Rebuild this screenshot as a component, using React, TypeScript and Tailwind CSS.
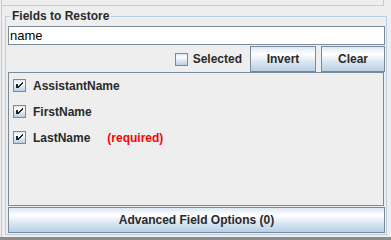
import React from "react";

const oceanGradient =
    "bg-[linear-gradient(to_bottom,#dde8f3_0%,#ffffff_30%,#dde8f3_60%,#b8cfe5_100%)]";

// Metal-style check mark, drawn pixel by pixel
const CheckMark = () => (
    <svg width="11" height="11" viewBox="0 0 11 11" shapeRendering="crispEdges">
        <rect x="2" y="4" width="2" height="4" fill="#222222" />
        {[
            [8, 2],
            [7, 3],
            [6, 4],
            [5, 5],
            [4, 6],
            [8, 3],
            [7, 4],
            [6, 5],
            [5, 6],
            [4, 7],
        ].map(([x, y], i) => (
            <rect key={i} x={x} y={y} width="1" height="1" fill="#222222" />
        ))}
    </svg>
);

const CheckBox = ({ checked }: { checked: boolean }) => (
    <div
        className={`w-[13px] h-[13px] border border-[#7a8a99] shrink-0 flex items-start justify-start ${oceanGradient}`}
    >
        {checked && <CheckMark />}
    </div>
);

const fields = [
    { name: "AssistantName", required: false },
    { name: "FirstName", required: false },
    { name: "LastName", required: true },
];

const App: React.FC = () => {
    return (
        <div className="w-[391px] h-[240px] bg-[#eeeeee] flex flex-col overflow-hidden [font-family:'Liberation_Sans',Arial,sans-serif] text-[#2a2a2a]">
            <div className="flex-1 ml-[1px] border-l border-[#b8cfe5] flex flex-col">
                {/* bottom of the panel above */}
                <div className="h-[6px] mr-[7px] border-b border-r border-[#b8cfe5]" />

                {/* Fields to Restore */}
                <fieldset className="mt-[3px] ml-[3px] mr-[4px] border border-[#b8cfe5] pl-[2px] pr-[1px] pb-[1px]">
                    <legend className="ml-[2px] px-[2px] text-[12px] leading-[14px] font-bold">
                        Fields to Restore
                    </legend>
                    <div className="mt-[3px] h-[19px] border border-[#7a8a99] bg-white flex items-center pl-[1px] text-[13px] text-black">
                        name
                    </div>
                    <div className="mt-[1px] h-[26px] flex items-center justify-end">
                        <CheckBox checked={false} />
                        <span className="ml-[5px] mr-[8px] text-[12px] font-bold">
                            Selected
                        </span>
                        <button
                            className={`w-[66px] h-[26px] border border-[#7a8a99] text-[12px] font-bold ${oceanGradient}`}
                        >
                            Invert
                        </button>
                        <button
                            className={`ml-[5px] w-[64px] h-[26px] border border-[#7a8a99] text-[12px] font-bold ${oceanGradient}`}
                        >
                            Clear
                        </button>
                    </div>
                    <div className="mr-[1px] h-[134px] border border-[#7a8a99] pl-[4px] pt-[6px] flex flex-col gap-[13px]">
                        {fields.map((f) => (
                            <div key={f.name} className="h-[13px] flex items-center">
                                <CheckBox checked={true} />
                                <span className="ml-[7px] text-[12px] font-bold">
                                    {f.name}
                                </span>
                                {f.required && (
                                    <span className="ml-[17px] text-[12px] font-bold text-[#ff0000]">
                                        (required)
                                    </span>
                                )}
                            </div>
                        ))}
                    </div>
                    <button
                        className={`mt-[1px] w-full h-[26px] border border-[#7a8a99] text-[12px] font-bold ${oceanGradient}`}
                    >
                        Advanced Field Options (0)
                    </button>
                </fieldset>
            </div>
            <div className="h-[3px] bg-[#8c8c8c]" />
        </div>
    );
};

export default App;
